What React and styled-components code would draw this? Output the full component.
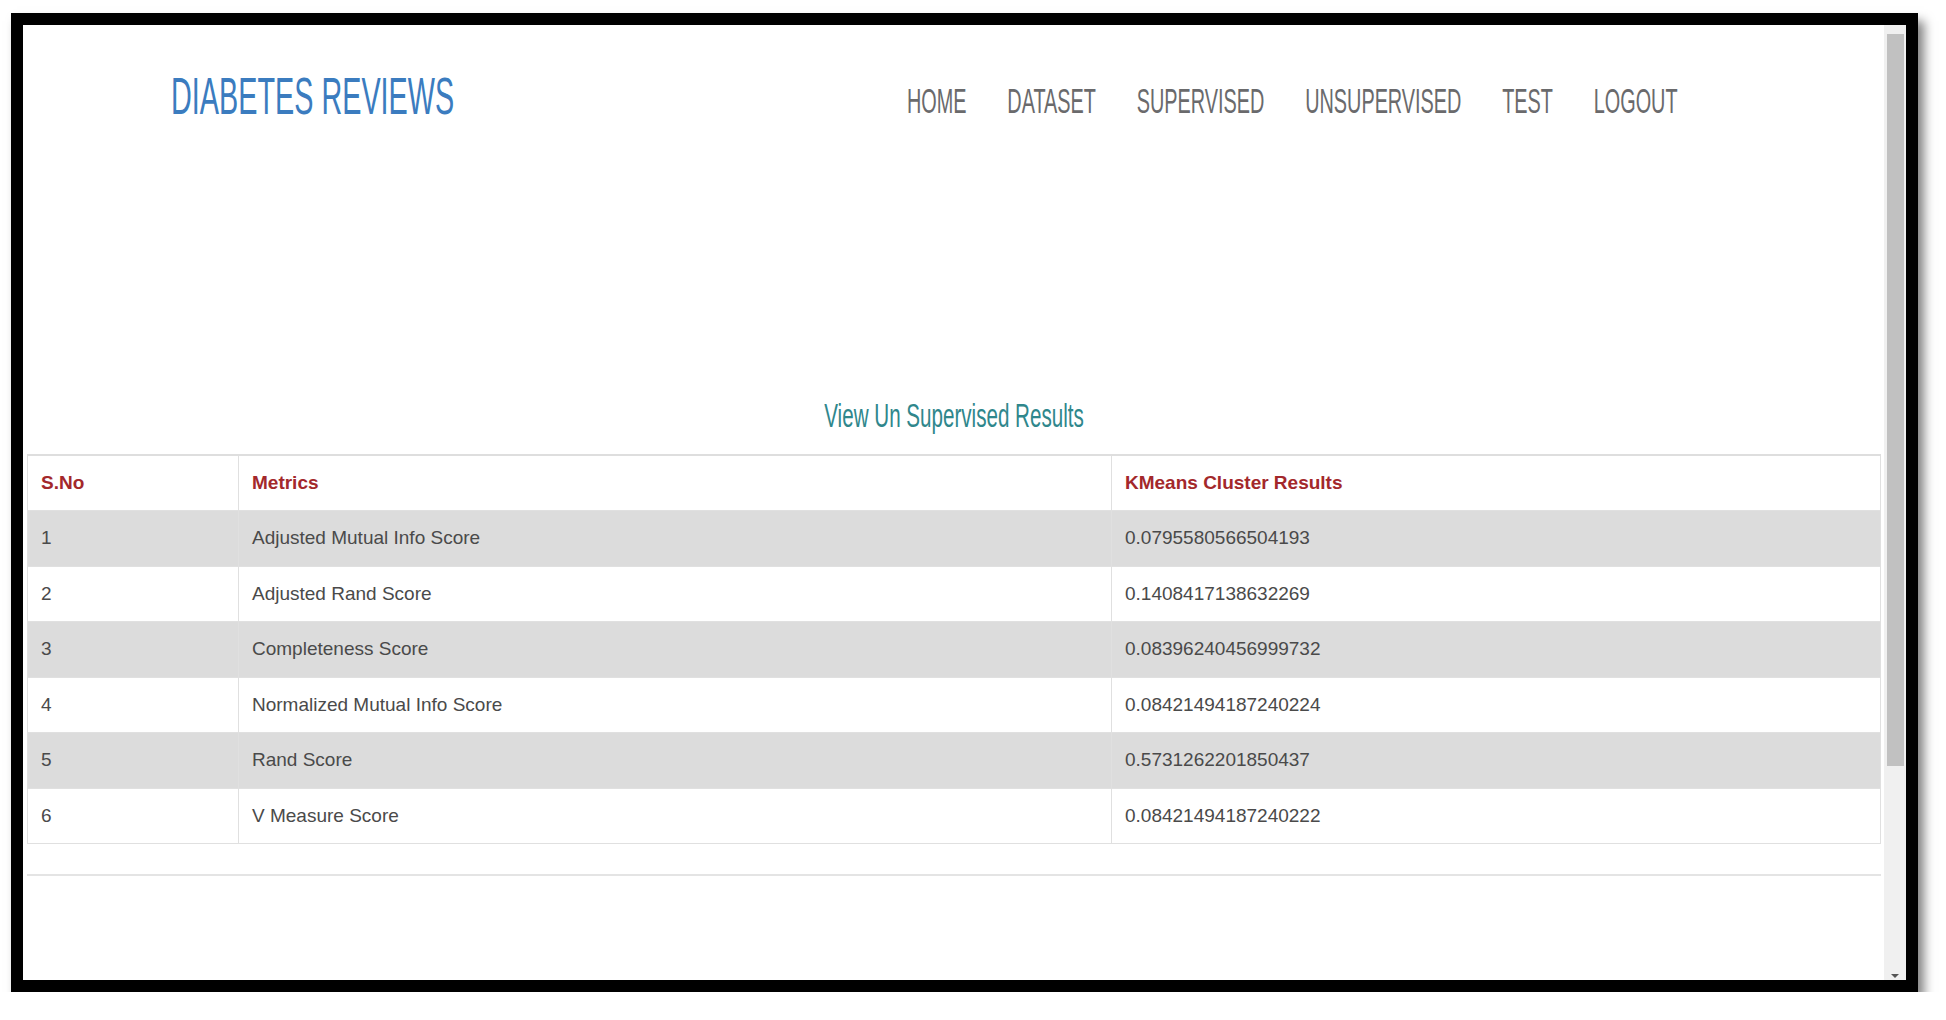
import React from "react";
import styled, { createGlobalStyle } from "styled-components";

const GlobalStyle = createGlobalStyle`
  html, body {
    margin: 0;
    padding: 0;
    background: #ffffff;
    overflow: hidden;
  }
  body {
    font-family: "Liberation Sans", Arial, sans-serif;
  }
`;

const Frame = styled.div`
  box-sizing: border-box;
  width: 1907px;
  height: 979px;
  margin: 13px 0 0 11px;
  border: 12px solid #000;
  background: #fff;
  box-shadow: 6px 8px 10px rgba(0, 0, 0, 0.5);
  display: flex;
  overflow: hidden;
`;

const Page = styled.div`
  flex: 1;
  display: flex;
  flex-direction: column;
  padding: 0 3px 0 4px;
  min-width: 0;
`;

const Header = styled.header`
  display: flex;
  align-items: flex-start;
  padding: 46px 0 0 144px;
`;

const Brand = styled.div`
  flex: 0 0 736px;
`;

const Logo = styled.span`
  display: inline-block;
  font-size: 51.7px;
  line-height: 1;
  color: #3b7cbf;
  transform: scaleX(0.557);
  transform-origin: left center;
  white-space: nowrap;
`;

const Nav = styled.nav`
  display: flex;
  gap: 72px;
  margin-top: 12px;
  transform: scaleX(0.567);
  transform-origin: left center;
  white-space: nowrap;
`;

const NavLink = styled.a`
  font-size: 35px;
  line-height: 1;
  color: #6a6a6c;
  text-decoration: none;
`;

const Title = styled.h2`
  margin: 276px 0 22px;
  text-align: center;
  font-weight: normal;
  font-size: 33.5px;
  line-height: 1;
`;

const TitleText = styled.span`
  display: inline-block;
  color: #2f878c;
  transform: scaleX(0.615);
  white-space: nowrap;
`;

const Table = styled.table`
  width: 100%;
  border-collapse: collapse;
  table-layout: fixed;
  font-size: 19px;
  border-top: 2px solid #dedede;
`;

const Col = styled.col`
  width: ${(p) => p.$w}px;
`;

const Th = styled.th`
  height: 54px;
  padding: 0 13px;
  text-align: left;
  font-weight: bold;
  color: #a3282b;
  border: 1px solid #e0e0e0;
  border-top: none;
`;

const Row = styled.tr`
  background: ${(p) => (p.$striped ? "#dcdcdc" : "#ffffff")};
`;

const Td = styled.td`
  height: 54.5px;
  padding: 0 13px;
  color: #4a4a4a;
  border: 1px solid #e0e0e0;
  white-space: nowrap;
`;

const TableFoot = styled.div`
  height: 30px;
  border-bottom: 2px solid #e4e4e4;
`;

const Scrollbar = styled.div`
  flex: 0 0 22px;
  background: #f0f0f0;
  display: flex;
  flex-direction: column;
  align-items: center;
  padding: 9px 0 0;
  box-sizing: border-box;
`;

const Thumb = styled.div`
  width: 17px;
  height: 732px;
  background: #c1c1c1;
`;

const ArrowDown = styled.div`
  margin-top: auto;
  margin-bottom: 2px;
  width: 0;
  height: 0;
  border-left: 4px solid transparent;
  border-right: 4px solid transparent;
  border-top: 4px solid #555;
`;

const links = ["HOME", "DATASET", "SUPERVISED", "UNSUPERVISED", "TEST", "LOGOUT"];

const results = [
  ["1", "Adjusted Mutual Info Score", "0.0795580566504193"],
  ["2", "Adjusted Rand Score", "0.1408417138632269"],
  ["3", "Completeness Score", "0.08396240456999732"],
  ["4", "Normalized Mutual Info Score", "0.08421494187240224"],
  ["5", "Rand Score", "0.5731262201850437"],
  ["6", "V Measure Score", "0.08421494187240222"],
];

export default function App() {
  return (
    <>
      <GlobalStyle />
      <Frame>
        <Page>
          <Header>
            <Brand>
              <Logo>DIABETES REVIEWS</Logo>
            </Brand>
            <Nav>
              {links.map((l) => (
                <NavLink key={l} href="#">
                  {l}
                </NavLink>
              ))}
            </Nav>
          </Header>

          <Title>
            <TitleText>View Un Supervised Results</TitleText>
          </Title>

          <Table>
            <colgroup>
              <Col $w={211} />
              <Col $w={873} />
              <Col $w={769} />
            </colgroup>
            <thead>
              <tr>
                <Th>S.No</Th>
                <Th>Metrics</Th>
                <Th>KMeans Cluster Results</Th>
              </tr>
            </thead>
            <tbody>
              {results.map((r, i) => (
                <Row key={r[0]} $striped={i % 2 === 0}>
                  <Td>{r[0]}</Td>
                  <Td>{r[1]}</Td>
                  <Td>{r[2]}</Td>
                </Row>
              ))}
            </tbody>
          </Table>
          <TableFoot />
        </Page>
        <Scrollbar>
          <Thumb />
          <ArrowDown />
        </Scrollbar>
      </Frame>
    </>
  );
}
